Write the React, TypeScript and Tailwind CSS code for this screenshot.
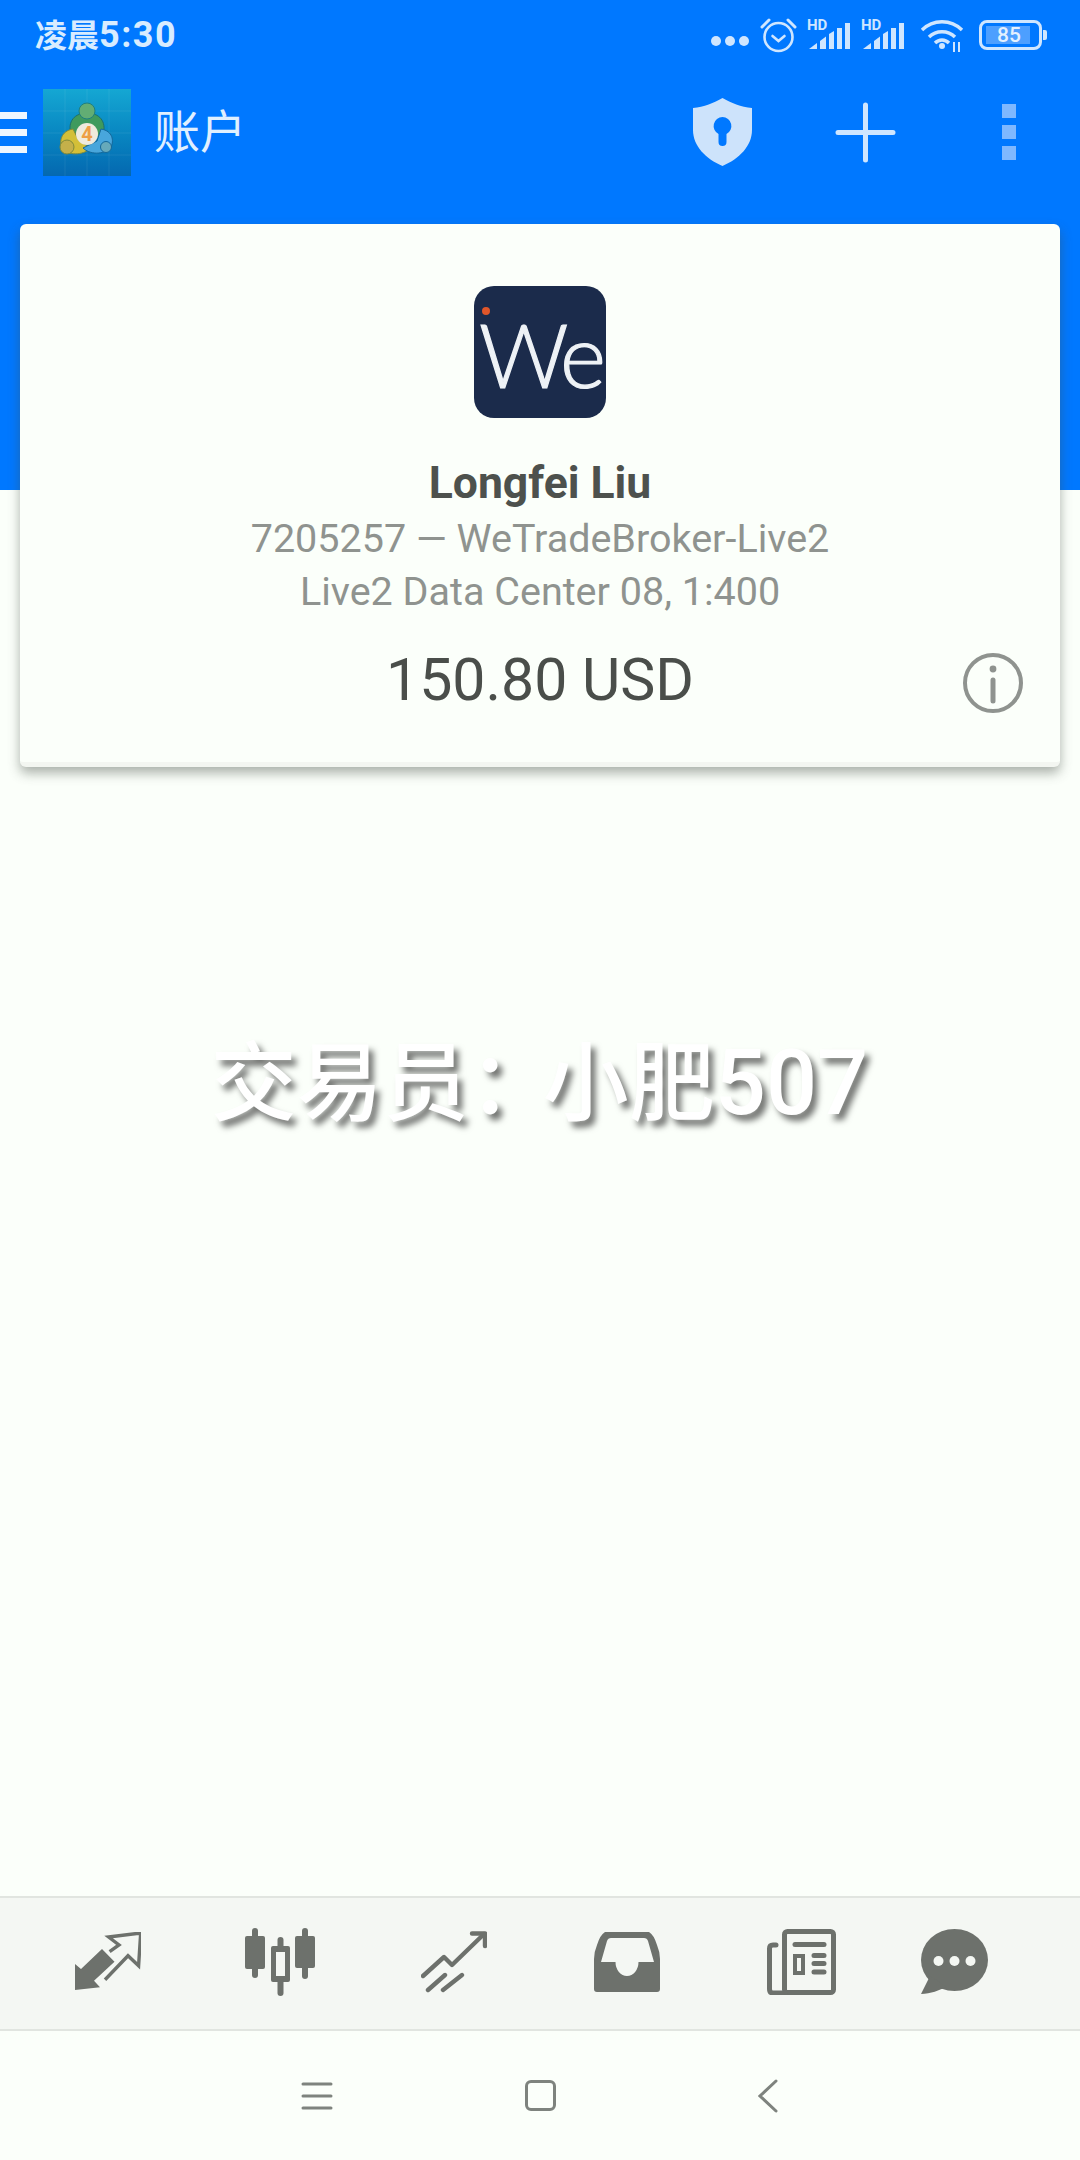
import React from "react";

function Alarm() {
  return (
    <svg width="37" height="36" viewBox="0 0 37 36" fill="none" stroke="#cfe6ff" strokeLinecap="round">
      <circle cx="18.5" cy="20" r="14" strokeWidth="2.6" />
      <path d="M12.5 19l6 5 6-5" strokeWidth="2.6" />
      <path d="M2 10L9 3M35 10L28 3" strokeWidth="3" />
    </svg>
  );
}

function Signal() {
  return (
    <div className="relative w-[43px] h-[30px]">
      <span className="absolute left-[-1px] top-[-2px] text-[15px] leading-[14px] font-bold text-[#cfe6ff]">HD</span>
      <svg className="absolute inset-0" width="43" height="30" viewBox="0 0 43 30" fill="#cfe6ff">
        <path d="M1 29L9 23V29Z" />
        <path d="M12 21L18 16.5V29H12Z" />
        <path d="M21 29V14L26 11V29Z" />
        <rect x="29" y="8" width="5" height="21" />
        <rect x="37" y="3" width="5" height="26" />
      </svg>
    </div>
  );
}

function Wifi() {
  return (
    <svg width="44" height="36" viewBox="0 0 44 36" fill="none" stroke="#cfe6ff" strokeWidth="3.4">
      <path d="M2 13C13 2 31 2 42 13" />
      <path d="M9 20C16 13 28 13 35 20" />
      <path d="M15 26C19 22 25 22 29 26" />
      <circle cx="22" cy="29" r="3" fill="#cfe6ff" stroke="none" />
      <path d="M34 25V35M39 25V35" strokeWidth="2" />
    </svg>
  );
}

function Battery() {
  return (
    <div className="flex items-center">
      <div className="relative w-[63px] h-[30px] rounded-[8px] border-[3px] border-[#cfe6ff] flex items-center pl-[4px]">
        <div className="w-[44px] h-[18px] bg-[#4d9fff]" />
        <span className="absolute inset-0 flex items-center justify-center text-[21px] leading-none font-medium text-[#e4f1ff] pr-[3px]">85</span>
      </div>
      <div className="w-[4px] h-[10px] ml-[1px] rounded-r-[2px] bg-[#cfe6ff]" />
    </div>
  );
}

function Mt4Logo() {
  return (
    <div className="relative w-[88px] h-[87px] shrink-0 bg-gradient-to-b from-[#15a7d3] to-[#0568b0]">
      <svg className="absolute inset-0" width="88" height="87" viewBox="0 0 88 87">
        <path d="M22 0V87M44 0V87M66 0V87M0 22H88M0 44H88M0 66H88" stroke="#ffffff" strokeOpacity="0.07" />
        <g transform="translate(0 2)">
          <path d="M28 44C24 30 32 22 44 22C56 22 64 30 60 44L44 48Z" fill="#3f9a5d" stroke="#1f6f6a" />
          <circle cx="44" cy="20" r="8" fill="#62ad74" stroke="#1f7f7f" />
          <path d="M30 38C18 40 16 50 19 58C28 66 42 63 48 57L36 50Z" fill="#d3bf38" stroke="#7f8a3a" />
          <circle cx="24" cy="56" r="7" fill="#c4b04a" stroke="#7f8a3a" />
          <path d="M58 38C70 40 71 50 68 56C60 65 46 63 40 57L54 50Z" fill="#48a6dc" stroke="#14689a" />
          <circle cx="63" cy="56" r="5.5" fill="#66a9ba" stroke="#14689a" />
          <circle cx="44" cy="43" r="11" fill="#efeadc" />
        </g>
      </svg>
      <span className="absolute left-0 right-0 top-[33px] text-center text-[20px] leading-[24px] font-bold text-[#ee9f45]">4</span>
    </div>
  );
}

function Shield() {
  return (
    <svg width="59" height="68" viewBox="0 0 59 68">
      <path
        fillRule="evenodd"
        fill="#cde3fb"
        d="M29.5 0C38 5 48 9 59 10V32C59 48 46 61 29.5 68C13 61 0 48 0 32V10C11 9 21 5 29.5 0ZM29.5 19A9 9 0 0 0 25.5 36V44A4 4 0 0 0 33.5 44V36A9 9 0 0 0 29.5 19Z"
      />
    </svg>
  );
}

function Plus() {
  return (
    <svg width="61" height="61" viewBox="0 0 61 61" stroke="#cfe6ff" strokeWidth="5" strokeLinecap="round">
      <path d="M30.5 3V58M3 30.5H58" />
    </svg>
  );
}

function WeLogo() {
  return (
    <div className="relative w-[132px] h-[132px] rounded-[20px] bg-[#1b2b4b] overflow-hidden">
      <span className="absolute left-[5px] top-[18px] text-[88px] leading-[100px] font-['Lato',sans-serif] font-light tracking-[-4px] [-webkit-text-stroke:1.2px_#eef2f6] text-[#eef2f6]">We</span>
      <div className="absolute left-[8px] top-[21px] w-[8px] h-[8px] rounded-full bg-[#e0562a]" />
    </div>
  );
}

function InfoIcon() {
  return (
    <svg width="60" height="60" viewBox="0 0 60 60" fill="none" stroke="#8f938f">
      <circle cx="30" cy="30" r="28" strokeWidth="4" />
      <path d="M30 27V48" strokeWidth="5" strokeLinecap="round" />
      <circle cx="30" cy="16" r="3.4" fill="#8f938f" stroke="none" />
    </svg>
  );
}

const G = "#6d716c";

function TradeIcon() {
  return (
    <svg width="66" height="59" viewBox="0 0 66 59">
      <path d="M0 58V32L6 37L27 17L39.5 29.7L19 48.7L25 55.3Z" fill={G} />
      <path d="M34.6 19.7L44 13L33.6 5L65.7 1L63.6 33.7L53 23.7L30 47.7" fill="none" stroke={G} strokeWidth="3.4" />
    </svg>
  );
}

function CandleIcon() {
  return (
    <svg width="71" height="68" viewBox="0 0 71 68" fill={G}>
      <rect x="0" y="8" width="20" height="33" rx="2" />
      <rect x="7" y="0" width="6" height="50" rx="3" />
      <rect x="26" y="18" width="19" height="36" rx="2" />
      <rect x="32.5" y="9" width="6" height="59" rx="3" />
      <rect x="31" y="24" width="9" height="24" fill="#f4f7f3" />
      <rect x="50" y="8" width="20" height="32" rx="2" />
      <rect x="57" y="0" width="6" height="51" rx="3" />
    </svg>
  );
}

function ChartIcon() {
  return (
    <svg width="66" height="62" viewBox="0 0 66 62" fill="none" stroke={G} strokeWidth="4.4" strokeLinecap="round" strokeLinejoin="round">
      <path d="M2 45L23 26L31 34L63 3" />
      <path d="M51 2.5H64V15" />
      <path d="M7 59L24 44M22 59L41 44" />
    </svg>
  );
}

function InboxIcon() {
  return (
    <svg width="67" height="60" viewBox="0 0 67 60">
      <path
        fillRule="evenodd"
        fill={G}
        d="M11 0H55Q60 3 63 13Q66 20 66 27V57Q66 60 63 60H3Q0 60 0 57V27Q0 20 3 13Q6 3 11 0ZM7 30L13 9Q14 6 17 6H50Q53 6 54 9L60 30H44.5A11.5 14 0 0 1 21.5 30Z"
      />
    </svg>
  );
}

function NewsIcon() {
  return (
    <svg width="69" height="66" viewBox="0 0 69 66" fill="none" stroke={G} strokeLinecap="round">
      <rect x="17.5" y="2.5" width="49" height="61" rx="3" strokeWidth="5" />
      <path d="M9 16H6Q2.5 16 2.5 19.5V60Q2.5 64 6 64H18" strokeWidth="5" />
      <path d="M28 15.5H57" strokeWidth="5" />
      <rect x="28" y="27" width="8" height="17" strokeWidth="4" />
      <path d="M47 26.5H57M47 34.5H57M47 43H57" strokeWidth="5" />
    </svg>
  );
}

function ChatIcon() {
  return (
    <svg width="67" height="66" viewBox="0 0 67 66">
      <ellipse cx="33.5" cy="31" rx="33.5" ry="31" fill={G} />
      <path d="M9 47L0 65C10 65 18 61 26 58Z" fill={G} />
      <circle cx="17.5" cy="32" r="5" fill="#f4f7f3" />
      <circle cx="33.5" cy="32" r="5" fill="#f4f7f3" />
      <circle cx="49.5" cy="32" r="5" fill="#f4f7f3" />
    </svg>
  );
}

export default function App() {
  return (
    <div className="relative w-[1080px] h-[2160px] overflow-hidden flex flex-col bg-[#fbfffa] font-['Roboto','Noto_Sans_CJK_SC',sans-serif]">
      <header className="h-[490px] shrink-0 bg-[#0078ff] flex flex-col">
        <div className="h-[70px] flex items-center pl-[35px] pr-[33px]">
          <span className="text-[32px] leading-[40px] font-bold text-[#d8ecff]">
            凌晨<span className="text-[36px] tracking-[1.5px]">5:30</span>
          </span>
          <div className="ml-auto flex items-center">
            <div className="flex gap-[4px] mt-[12px] mr-[11px]">
              <div className="w-[10px] h-[10px] rounded-full bg-[#cfe6ff]" />
              <div className="w-[10px] h-[10px] rounded-full bg-[#cfe6ff]" />
              <div className="w-[10px] h-[10px] rounded-full bg-[#cfe6ff]" />
            </div>
            <Alarm />
            <div className="ml-[11px] flex gap-[11px]">
              <Signal />
              <Signal />
            </div>
            <div className="ml-[15px]"><Wifi /></div>
            <div className="ml-[15px]"><Battery /></div>
          </div>
        </div>
        <div className="h-[100px] flex items-center mt-[12px]">
          <div className="w-[27px] flex flex-col gap-[10px] shrink-0">
            <div className="h-[7px] bg-[#eef6ff]" />
            <div className="h-[7px] bg-[#eef6ff]" />
            <div className="h-[7px] bg-[#eef6ff]" />
          </div>
          <div className="ml-[16px]"><Mt4Logo /></div>
          <span className="ml-[23px] text-[46px] leading-[50px] text-[#e0f0ff]">账户</span>
          <div className="ml-auto flex items-center">
            <Shield />
            <div className="ml-[83px]"><Plus /></div>
            <div className="ml-[106px] mr-[64px] flex flex-col gap-[7px]">
              <div className="w-[14px] h-[14px] bg-[#7fb8ff]" />
              <div className="w-[14px] h-[14px] bg-[#7fb8ff]" />
              <div className="w-[14px] h-[14px] bg-[#7fb8ff]" />
            </div>
          </div>
        </div>
      </header>

      <main className="flex-1 min-h-0 px-[20px]">
        <section className="relative h-[543px] mt-[-266px] rounded-[6px] bg-[#fbfffa] shadow-[0_6px_12px_rgba(70,80,70,0.45)] border-b-[5px] border-[#f3f6f1] flex flex-col items-center pt-[62px]">
          <WeLogo />
          <h2 className="mt-[40px] text-[44.5px] leading-[50px] font-bold text-[#4d514d]">Longfei Liu</h2>
          <p className="mt-[6px] text-[39.5px] leading-[50px] text-[#8f938f]">7205257 — WeTradeBroker-Live2</p>
          <p className="mt-[3px] text-[39.5px] leading-[50px] text-[#8f938f]">Live2 Data Center 08, 1:400</p>
          <p className="mt-[29px] text-[59px] leading-[68px] text-[#4a4e4a]">150.80 USD</p>
          <div className="absolute right-[37px] top-[429px]"><InfoIcon /></div>
        </section>
      </main>

      <div className="absolute left-0 right-0 top-[1034px] text-center pr-[1px] text-[86px] leading-[100px] font-medium text-white [text-shadow:5px_6px_6px_rgba(0,0,0,0.55)]">
        交易员<span className="tracking-[-12px]">：</span>小肥<span className="text-[90px]">507</span>
      </div>

      <nav className="h-[135px] shrink-0 flex items-center pl-[75px] pb-[4px] bg-[#f4f7f3] border-y-2 border-[#e1e5e0]">
        <TradeIcon />
        <div className="ml-[104px]"><CandleIcon /></div>
        <div className="ml-[105px]"><ChartIcon /></div>
        <div className="ml-[107px]"><InboxIcon /></div>
        <div className="ml-[106px]"><NewsIcon /></div>
        <div className="ml-[85px]"><ChatIcon /></div>
      </nav>

      <div className="h-[129px] shrink-0 flex items-center pl-[301px]">
        <svg width="32" height="28" viewBox="0 0 32 28" stroke="#7e837e" strokeWidth="3" strokeLinecap="round">
          <path d="M2 2H30M2 14H30M2 26H30" />
        </svg>
        <div className="ml-[192px] w-[31px] h-[31px] rounded-[6px] border-[3px] border-[#7e837e]" />
        <svg className="ml-[202px]" width="20" height="34" viewBox="0 0 20 34" fill="none" stroke="#7e837e" strokeWidth="3" strokeLinecap="round">
          <path d="M18 2L2 17L18 32" />
        </svg>
      </div>
    </div>
  );
}
